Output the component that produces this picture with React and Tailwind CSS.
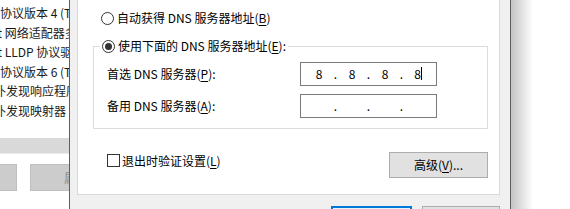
import React from 'react';

const rows = [
    { cut: '', cutW: 'w-0', rest: '协议版本 4 (TCP/IPv4)' },
    { cut: 'Microsoft', cutW: 'w-[2px]', rest: ' 网络适配器多路传送器协议' },
    { cut: 'Microsoft', cutW: 'w-[2px]', rest: ' LLDP 协议驱动程序' },
    { cut: '', cutW: 'w-0', rest: '协议版本 6 (TCP/IPv6)' },
    { cut: '链路层拓扑', cutW: 'w-[6px]', rest: '发现响应程序' },
    { cut: '链路层拓扑', cutW: 'w-[6px]', rest: '发现映射器 I/O 驱动程序' },
];

function Key({ children }) {
    return <span className="underline underline-offset-2">{children}</span>;
}

function Radio({ checked }) {
    return (
        <span className="w-[13px] h-[13px] shrink-0 rounded-full border border-[#333333] bg-white flex items-center justify-center">
            {checked && <span className="w-[7px] h-[7px] rounded-full bg-[#333333]" />}
        </span>
    );
}

function IpBox({ values, caret }) {
    const cells = [];
    values.forEach((v, i) => {
        const last = i === values.length - 1;
        cells.push(
            <span key={'v' + i} className="w-[22px] text-center">
                {last && caret ? (
                    <span className="inline-block border-r border-black leading-[13px]">{v}</span>
                ) : (
                    v
                )}
            </span>
        );
        if (!last) {
            cells.push(
                <span key={'d' + i} className="w-[11px] text-center">
                    .
                </span>
            );
        }
    });
    return (
        <div className="w-[137px] h-[24px] border border-[#7a7a7a] bg-white flex items-center pl-[7px] leading-[16px]">
            {cells}
        </div>
    );
}

function LeftWindow() {
    return (
        <div className="w-[69px] shrink-0 flex flex-col overflow-hidden bg-white text-[#1a1a1a]">
            <div className="h-[138px] pt-[3px]">
                {rows.map((r, i) => (
                    <div key={i} className="h-[19.6px] leading-[19.6px] flex whitespace-nowrap">
                        {r.cut && (
                            <span className={`flex ${r.cutW} shrink-0 justify-end overflow-hidden`}>
                                <span className="shrink-0">{r.cut}</span>
                            </span>
                        )}
                        <span className="shrink-0 whitespace-pre">{r.rest}</span>
                    </div>
                ))}
            </div>
            <div className="h-[16px] bg-[#d9d9d9] border-b border-[#e9e9e9]" />
            <div className="mt-[10px] h-[27px] flex">
                <div className="w-[17px] shrink-0 bg-[#cccccc] border border-l-0 border-[#bfbfbf]" />
                <div className="ml-[13px] w-[70px] shrink-0 bg-[#cccccc] border border-[#bfbfbf] flex items-center pl-[33px] text-[#8c8c8c] whitespace-nowrap">
                    属性(R)
                </div>
            </div>
        </div>
    );
}

function Dialog() {
    return (
        <div className="w-[442px] shrink-0 flex flex-col border-x border-[#5f5f5f] bg-[#f0f0f0] pl-[7px] pr-[10px]">
            <div className="h-[195px] shrink-0 flex flex-col bg-white border-x border-b border-[#d9d9d9]">
                {/* automatic */}
                <div className="mt-[10px] ml-[23px] h-[16px] flex items-center gap-[3px] leading-[16px]">
                    <Radio />
                    <span>
                        自动获得 DNS 服务器地址(<Key>B</Key>)
                    </span>
                </div>

                {/* manual group */}
                <fieldset className="mt-[12px] ml-[15px] mr-[11px] border border-[#dcdcdc]">
                    <legend className="ml-[6px] px-[2px] h-[16px] leading-[16px]">
                        <span className="flex items-center gap-[3px]">
                            <Radio checked />
                            <span>
                                使用下面的 DNS 服务器地址(<Key>E</Key>):
                            </span>
                        </span>
                    </legend>
                    <div className="pt-[8px] pb-[10px] pl-[13px] flex flex-col gap-[8px]">
                        <div className="h-[24px] flex items-center">
                            <span className="w-[193px] shrink-0 leading-[16px]">
                                首选 DNS 服务器(<Key>P</Key>):
                            </span>
                            <IpBox values={['8', '8', '8', '8']} caret />
                        </div>
                        <div className="h-[24px] flex items-center">
                            <span className="w-[193px] shrink-0 leading-[16px]">
                                备用 DNS 服务器(<Key>A</Key>):
                            </span>
                            <IpBox values={['', '', '', '']} />
                        </div>
                    </div>
                </fieldset>

                {/* validate + advanced */}
                <div className="mt-[23px] ml-[29px] mr-[11px] flex items-start justify-between">
                    <div className="h-[17px] flex items-center gap-[2px] leading-[16px]">
                        <span className="w-[13px] h-[13px] shrink-0 border border-[#333333] bg-white" />
                        <span>
                            退出时验证设置(<Key>L</Key>)
                        </span>
                    </div>
                    <button className="w-[99px] h-[26px] bg-[#e1e1e1] border border-[#adadad] flex items-center justify-center leading-[16px]">
                        高级(<Key>V</Key>)...
                    </button>
                </div>
            </div>

            {/* dialog buttons */}
            <div className="mt-[11px] flex justify-end gap-[10px]">
                <button className="w-[81px] h-[23px] shrink-0 bg-[#e5f1fb] border-2 border-[#0078d7]">确定</button>
                <button className="w-[78px] h-[23px] shrink-0 bg-[#e1e1e1] border border-[#adadad]">取消</button>
            </div>
        </div>
    );
}

export default function App() {
    return (
        <div className="w-[570px] h-[209px] flex overflow-hidden bg-white text-[12px] text-black font-['Noto_Sans_CJK_SC',sans-serif]">
            <LeftWindow />
            <Dialog />
            <div className="w-[22px] shrink-0 bg-linear-to-r from-[#c4c4c4] to-white" />
            <div className="flex-1 bg-white" />
        </div>
    );
}
